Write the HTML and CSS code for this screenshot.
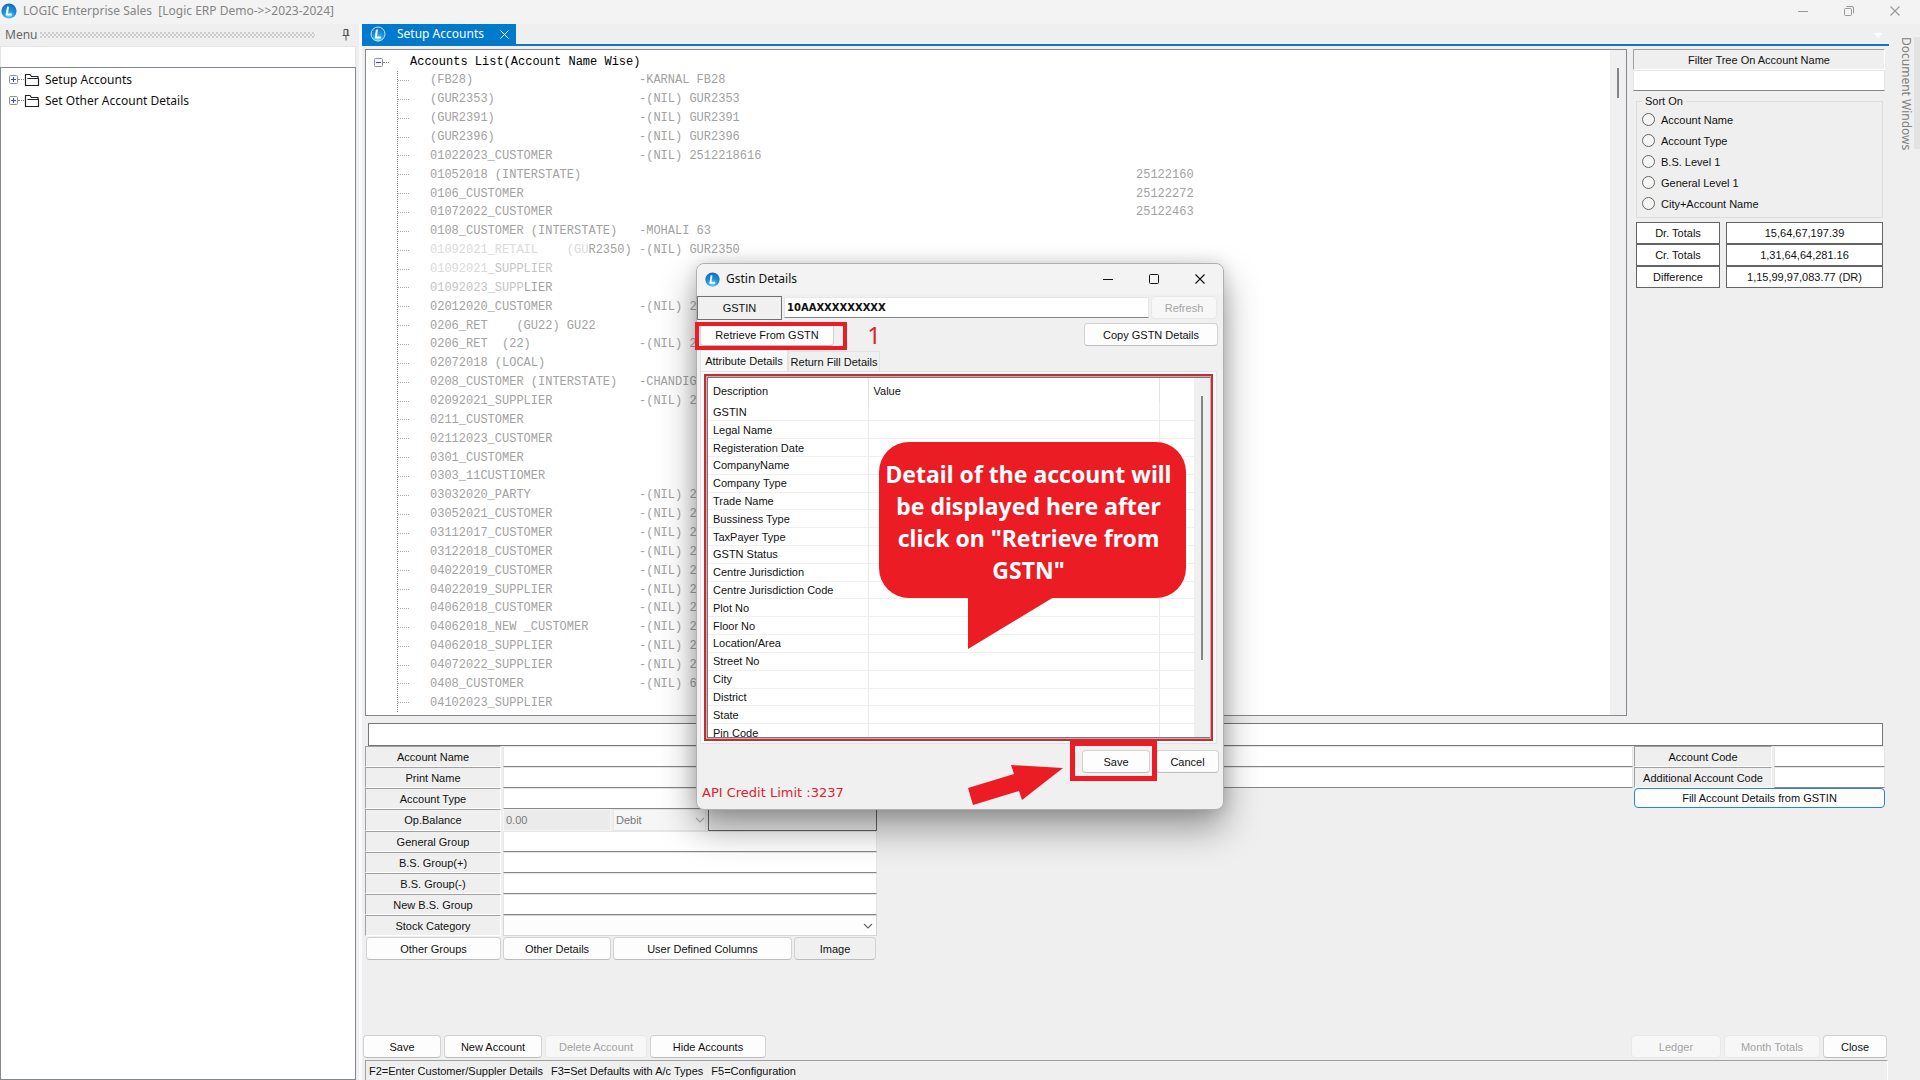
FILE: index.html
```html
<!DOCTYPE html>
<html lang="en">
<head>
<meta charset="utf-8">
<title>LOGIC Enterprise Sales</title>
<link rel="stylesheet" href="styles.css">
</head>
<body>
<svg width="0" height="0" class="defs" aria-hidden="true">
  <defs>
    <radialGradient id="orb" cx="50%" cy="85%" r="85%">
      <stop offset="0" stop-color="#5fd0ff"/><stop offset="0.5" stop-color="#1a8fe0"/><stop offset="1" stop-color="#1668b8"/>
    </radialGradient>
    <symbol id="logo" viewBox="0 0 16 16">
      <circle cx="8" cy="8" r="7.6" fill="url(#orb)"/>
      <path d="M7 3.6 5.8 11.4H10.8" fill="none" stroke="#fff" stroke-width="2"/>
    </symbol>
    <symbol id="folder" viewBox="0 0 16 14">
      <path d="M14 5.5V3.5H7.5L6 1.5H1.5V12.5H14.5V5.5H3.5" fill="none" stroke="#222" stroke-width="1.2" stroke-linejoin="round"/>
    </symbol>
    <symbol id="plus" viewBox="0 0 9 9">
      <rect x="0.5" y="0.5" width="8" height="8" rx="1" fill="#f6f6f6" stroke="#919191"/><path d="M2 4.5H7M4.5 2V7" stroke="#3c50a0"/>
    </symbol>
    <symbol id="minus" viewBox="0 0 9 9">
      <rect x="0.5" y="0.5" width="8" height="8" rx="1" fill="#f6f6f6" stroke="#919191"/><path d="M2 4.5H7" stroke="#3c50a0"/>
    </symbol>
    <symbol id="chevron" viewBox="0 0 10 6"><path d="M1 1 5 5 9 1" fill="none" stroke="currentColor" stroke-width="1.1"/></symbol>
    <symbol id="min" viewBox="0 0 10 10"><path d="M0 5.5H10" stroke="currentColor"/></symbol>
    <symbol id="max" viewBox="0 0 10 10"><rect x="0.5" y="0.5" width="9" height="9" rx="1" fill="none" stroke="currentColor"/></symbol>
    <symbol id="restore" viewBox="0 0 10 10"><rect x="0.5" y="2.5" width="7" height="7" rx="1" fill="none" stroke="currentColor"/><path d="M2.5 0.5H8A1.5 1.5 0 0 1 9.5 2V7.5" fill="none" stroke="currentColor"/></symbol>
    <symbol id="x" viewBox="0 0 10 10"><path d="M0.5 0.5 9.5 9.5M9.5 0.5 0.5 9.5" stroke="currentColor" stroke-width="1.1"/></symbol>
  </defs>
</svg>

<div class="app">
  <header class="titlebar">
    <svg class="logo"><use href="#logo"/></svg>
    <h1>LOGIC Enterprise Sales&nbsp; [Logic ERP Demo-&gt;&gt;2023-2024]</h1>
    <div class="window-buttons">
      <button aria-label="Minimize"><svg><use href="#min"/></svg></button>
      <button aria-label="Restore"><svg><use href="#restore"/></svg></button>
      <button aria-label="Close window"><svg><use href="#x"/></svg></button>
    </div>
  </header>

  <div class="body">
    <aside class="menu">
      <div class="menu-head">
        <label for="menu-search">Menu</label><span class="grip"></span>
        <svg class="pin" viewBox="0 0 8 12"><path d="M2 0.5H6V6.5M2 0.5V6.5M0.5 6.5H7.5M4 6.5V11.5M5.3 1V6" fill="none" stroke="#555"/></svg>
      </div>
      <input id="menu-search" class="menu-search" type="text">
      <ul class="menu-tree">
        <li><svg class="toggle"><use href="#plus"/></svg><span class="link"></span><svg class="folder"><use href="#folder"/></svg><a href="#">Setup Accounts</a></li>
        <li><svg class="toggle"><use href="#plus"/></svg><span class="link"></span><svg class="folder"><use href="#folder"/></svg><a href="#">Set Other Account Details</a></li>
      </ul>
    </aside>

    <main class="workspace">
      <div class="tabs">
        <div class="tab">
          <svg class="logo"><use href="#logo"/><circle cx="50%" cy="50%" r="7" fill="none" stroke="#bfe2fa"/></svg>
          <span>Setup Accounts</span>
          <button aria-label="Close tab"><svg><use href="#x"/></svg></button>
        </div>
        <svg class="tab-menu" viewBox="0 0 8 5"><path d="M0 0H8L4 5Z" fill="#fff"/></svg>
      </div>

      <div class="page">
        <div class="top">
          <section class="accounts">
            <div class="tree">
              <div class="root"><svg class="toggle"><use href="#minus"/></svg><span class="link"></span><span class="root-name">Accounts List(Account Name Wise)</span></div>
              <ul class="rows">
                <li><span>(FB28)</span><span>-KARNAL FB28</span></li>
                <li><span>(GUR2353)</span><span>-(NIL) GUR2353</span></li>
                <li><span>(GUR2391)</span><span>-(NIL) GUR2391</span></li>
                <li><span>(GUR2396)</span><span>-(NIL) GUR2396</span></li>
                <li><span>01022023_CUSTOMER</span><span>-(NIL) 2512218616</span></li>
                <li><span>01052018 (INTERSTATE)</span><span></span><span>25122160</span></li>
                <li><span>0106_CUSTOMER</span><span></span><span>25122272</span></li>
                <li><span>01072022_CUSTOMER</span><span></span><span>25122463</span></li>
                <li><span>0108_CUSTOMER (INTERSTATE)</span><span>-MOHALI 63</span></li>
                <li><span><i class="faint">01092021_RETAIL    (GU</i>R2350)</span><span>-(NIL) GUR2350</span></li>
                <li><span><i class="faint">01092021</i><i class="pale">_SUPPLIER</i></span></li>
                <li><span><i class="pale">01092023_SUPP</i>LIER</span></li>
                <li><span>02012020_CUSTOMER</span><span>-(NIL) 2</span></li>
                <li><span>0206_RET    (GU22) GU22</span></li>
                <li><span>0206_RET  (22)</span><span>-(NIL) 2</span></li>
                <li><span>02072018 (LOCAL)</span></li>
                <li><span>0208_CUSTOMER (INTERSTATE)</span><span>-CHANDIG</span></li>
                <li><span>02092021_SUPPLIER</span><span>-(NIL) 2</span></li>
                <li><span>0211_CUSTOMER</span></li>
                <li><span>02112023_CUSTOMER</span></li>
                <li><span>0301_CUSTOMER</span></li>
                <li><span>0303_11CUSTIOMER</span></li>
                <li><span>03032020_PARTY</span><span>-(NIL) 2</span></li>
                <li><span>03052021_CUSTOMER</span><span>-(NIL) 2</span></li>
                <li><span>03112017_CUSTOMER</span><span>-(NIL) 2</span></li>
                <li><span>03122018_CUSTOMER</span><span>-(NIL) 2</span></li>
                <li><span>04022019_CUSTOMER</span><span>-(NIL) 2</span></li>
                <li><span>04022019_SUPPLIER</span><span>-(NIL) 2</span></li>
                <li><span>04062018_CUSTOMER</span><span>-(NIL) 2</span></li>
                <li><span>04062018_NEW _CUSTOMER</span><span>-(NIL) 2</span></li>
                <li><span>04062018_SUPPLIER</span><span>-(NIL) 2</span></li>
                <li><span>04072022_SUPPLIER</span><span>-(NIL) 2</span></li>
                <li><span>0408_CUSTOMER</span><span>-(NIL) 6</span></li>
                <li><span>04102023_SUPPLIER</span></li>
              </ul>
            </div>
            <div class="scroll"><span class="thumb"></span></div>
          </section>

          <aside class="side">
            <label class="filter-label" for="filter">Filter Tree On Account Name</label>
            <input id="filter" class="field filter" type="text">
            <fieldset class="sort">
              <legend>Sort On</legend>
              <label><input type="radio" name="sort">Account Name</label>
              <label><input type="radio" name="sort">Account Type</label>
              <label><input type="radio" name="sort">B.S. Level 1</label>
              <label><input type="radio" name="sort">General Level 1</label>
              <label><input type="radio" name="sort">City+Account Name</label>
            </fieldset>
            <dl class="totals">
              <dt>Dr. Totals</dt><dd>15,64,67,197.39</dd>
              <dt>Cr. Totals</dt><dd>1,31,64,64,281.16</dd>
              <dt>Difference</dt><dd>1,15,99,97,083.77 (DR)</dd>
            </dl>
          </aside>
        </div>

        <input class="remark" type="text" aria-label="Selected account">

        <form class="form">
          <div class="form-main">
            <div class="row"><label class="cap" for="an">Account Name</label><input id="an" class="field" type="text"></div>
            <div class="row"><label class="cap" for="pn">Print Name</label><input id="pn" class="field" type="text"></div>
            <div class="row narrow"><label class="cap" for="at">Account Type</label><input id="at" class="field" type="text"></div>
            <div class="row narrow tall"><label class="cap" for="ob">Op.Balance</label>
              <input id="ob" class="opening" type="text" value="0.00" disabled>
              <span class="drop off"><select aria-label="Balance side" disabled><option>Debit</option></select><svg><use href="#chevron"/></svg></span>
              <input class="balance" type="text" aria-label="Balance">
            </div>
            <div class="row narrow"><label class="cap" for="gg">General Group</label><input id="gg" class="field" type="text"></div>
            <div class="row narrow"><label class="cap" for="bp">B.S. Group(+)</label><input id="bp" class="field" type="text"></div>
            <div class="row narrow"><label class="cap" for="bm">B.S. Group(-)</label><input id="bm" class="field" type="text"></div>
            <div class="row narrow"><label class="cap" for="nb">New B.S. Group</label><input id="nb" class="field" type="text"></div>
            <div class="row narrow"><label class="cap" for="sc">Stock Category</label>
              <span class="drop"><select id="sc"><option></option></select><svg><use href="#chevron"/></svg></span>
            </div>
            <div class="form-buttons">
              <button type="button" class="btn">Other Groups</button>
              <button type="button" class="btn">Other Details</button>
              <button type="button" class="btn">User Defined Columns</button>
              <button type="button" class="btn flat">Image</button>
            </div>
          </div>
          <div class="form-side">
            <div class="row"><label class="cap" for="ac">Account Code</label><input id="ac" class="field" type="text"></div>
            <div class="row"><label class="cap" for="aac">Additional Account Code</label><input id="aac" class="field" type="text"></div>
            <button type="button" class="btn focus">Fill Account Details from GSTIN</button>
          </div>
        </form>

        <div class="actions">
          <button class="btn w-save">Save</button>
          <button class="btn w-new">New Account</button>
          <button class="btn w-del" disabled>Delete Account</button>
          <button class="btn w-hide">Hide Accounts</button>
          <span class="fill"></span>
          <button class="btn w-ledger" disabled>Ledger</button>
          <button class="btn w-month" disabled>Month Totals</button>
          <button class="btn w-close">Close</button>
        </div>
        <footer class="status"><span>F2=Enter Customer/Suppler Details</span><span>F3=Set Defaults with A/c Types</span><span>F5=Configuration</span></footer>
      </div>
    </main>

    <aside class="dock"><span>Document Windows</span></aside>
  </div>
</div>

<section class="dialog" role="dialog" aria-labelledby="dlg-title">
  <header class="dialog-title">
    <svg class="logo"><use href="#logo"/></svg>
    <h2 id="dlg-title">Gstin Details</h2>
    <div class="window-buttons">
      <button aria-label="Minimize dialog"><svg><use href="#min"/></svg></button>
      <button aria-label="Maximize dialog"><svg><use href="#max"/></svg></button>
      <button aria-label="Close dialog"><svg><use href="#x"/></svg></button>
    </div>
  </header>
  <div class="gst-row">
    <label class="gst-label" for="gstin">GSTIN</label>
    <input id="gstin" class="field gst-input" type="text" value="10AAXXXXXXXXX">
    <button class="btn" disabled>Refresh</button>
  </div>
  <div class="retrieve-row">
    <button class="btn retrieve">Retrieve From GSTN</button>
    <span class="step">1</span>
    <button class="btn copy">Copy GSTN Details</button>
  </div>
  <div class="dialog-tabs">
    <button class="on">Attribute Details</button><button>Return Fill Details</button>
  </div>
  <div class="pane">
    <div class="grid-box">
      <div class="grid-clip">
        <table>
          <thead><tr><th class="c-desc">Description</th><th class="c-val">Value</th><th></th></tr></thead>
          <tbody>
            <tr><td>GSTIN</td><td></td><td></td></tr>
            <tr><td>Legal Name</td><td></td><td></td></tr>
            <tr><td>Registeration Date</td><td></td><td></td></tr>
            <tr><td>CompanyName</td><td></td><td></td></tr>
            <tr><td>Company Type</td><td></td><td></td></tr>
            <tr><td>Trade Name</td><td></td><td></td></tr>
            <tr><td>Bussiness Type</td><td></td><td></td></tr>
            <tr><td>TaxPayer Type</td><td></td><td></td></tr>
            <tr><td>GSTN Status</td><td></td><td></td></tr>
            <tr><td>Centre Jurisdiction</td><td></td><td></td></tr>
            <tr><td>Centre Jurisdiction Code</td><td></td><td></td></tr>
            <tr><td>Plot No</td><td></td><td></td></tr>
            <tr><td>Floor No</td><td></td><td></td></tr>
            <tr><td>Location/Area</td><td></td><td></td></tr>
            <tr><td>Street No</td><td></td><td></td></tr>
            <tr><td>City</td><td></td><td></td></tr>
            <tr><td>District</td><td></td><td></td></tr>
            <tr><td>State</td><td></td><td></td></tr>
            <tr><td>Pin Code</td><td></td><td></td></tr>
          </tbody>
        </table>
      </div>
      <div class="scroll"><span class="thumb"></span></div>
    </div>
  </div>
  <div class="dialog-foot">
    <p class="credit">API Credit Limit :3237</p>
    <div class="dialog-actions"><button class="btn dlg-save">Save</button><button class="btn dlg-cancel">Cancel</button></div>
  </div>

  <span class="mark mark-retrieve"></span>
  <span class="mark mark-save"></span>
  <svg class="arrow" viewBox="0 0 96 42"><path d="M0 24 46 10 43 1 95 4 54 36 51 27 5 41Z" fill="#ec1c24"/></svg>
  <div class="callout">
    <p>Detail of the account will be displayed here after click on "Retrieve from GSTN"</p>
    <svg viewBox="0 0 86 52"><path d="M0 0H86L0 52Z" fill="#ec1c24"/></svg>
  </div>
</section>
</body>
</html>
```
FILE: styles.css
```css
:root {
  --ui: "Liberation Sans", Arial, sans-serif;
  --segoe: "Noto Sans", "Open Sans", sans-serif;
  --mono: "Liberation Mono", monospace;
  --bg: #efefef;
  --red: #ec1c24;
}
* { box-sizing: border-box; }
body { margin: 0; background: var(--bg); color: #111; font: 11px/16px var(--ui); overflow: hidden; position: relative; }
.defs { position: absolute; }
h1, h2, p, dl, dd, ul { margin: 0; padding: 0; font-weight: normal; list-style: none; }
input, select, button { font: inherit; color: inherit; margin: 0; min-width: 0; border-radius: 0; outline: 0; }
button { padding: 0; border: 0; background: none; }

.app { display: flex; flex-direction: column; height: 100vh; }
.logo { width: 16px; height: 16px; flex: none; }

/* main window title */
.titlebar { display: flex; align-items: center; gap: 6px; height: 24px; padding: 0 2px 2px 1px; background: #f3f3f3; color: #858585; font: 12px/16px var(--segoe); }
.titlebar h1 { flex: 1; font-size: 12px; }
.window-buttons { display: flex; align-items: center; }
.window-buttons button { width: 46px; height: 22px; display: grid; place-items: center; }
.window-buttons svg { width: 10px; height: 10px; }
.titlebar .window-buttons { color: #999; }

.body { flex: 1; min-height: 0; display: flex; }

/* left menu */
.menu { width: 356px; display: flex; flex-direction: column; }
.menu-head { display: flex; align-items: center; height: 22px; padding: 0 6px 0 5px; color: #666; font: 12px/16px var(--segoe); gap: 3px; }
.grip { flex: 1; height: 6px; margin-right: 24px; background: radial-gradient(circle at 1px 1px, #ccc 1px, transparent 1px) 0 0 / 4px 4px, radial-gradient(circle at 1px 1px, #ccc 1px, transparent 1px) 2px 2px / 4px 4px; }
.pin { width: 8px; height: 12px; }
.menu-search { height: 21px; border: 1px solid #e4e4e4; border-bottom: 0; background: #fff; }
.menu-tree { flex: 1; border: 1px solid #828790; background: #fff; padding: 1px 8px; font: 12px/21px var(--segoe); }
.menu-tree li { display: flex; align-items: center; height: 21px; }
.menu-tree a { color: #111; text-decoration: none; margin-left: 5px; }
.toggle { width: 9px; height: 9px; flex: none; }
.link { width: 6px; border-top: 1px dotted #888; }
.folder { width: 16px; height: 14px; }

/* tab strip */
.workspace { flex: 1; min-width: 0; display: flex; flex-direction: column; margin-left: 6px; box-shadow: -3px 0 0 #fafafa; }
.tabs { display: flex; align-items: flex-end; justify-content: space-between; height: 22px; border-bottom: 2px solid #1177bd; }
.tab { display: flex; align-items: center; gap: 11px; height: 20px; width: 154px; padding: 0 2px 0 8px; background: #007acc; color: #fff; font: 12px/16px var(--segoe); align-self: flex-start; }
.tab span { flex: 1; white-space: nowrap; }
.tab button { width: 20px; display: grid; place-items: center; }
.tab button svg { width: 9px; height: 9px; }
.tab-menu { width: 8px; height: 5px; margin: 0 7px 6px 0; }

.page { flex: 1; min-height: 0; display: flex; flex-direction: column; }
.top { flex: 1; min-height: 0; display: flex; gap: 6px; margin: 3px 4px 0 3px; }

/* accounts tree */
.accounts { flex: 1; min-width: 0; display: flex; background: #fff; border: 1px solid #828790; font: 12px/18px var(--mono); }
.tree { flex: 1; min-width: 0; display: flex; flex-direction: column; padding: 3px 0 3px; }
.root { display: flex; align-items: center; height: 18px; padding-left: 8px; color: #000; }
.root-name { margin-left: 21px; }
.rows { flex: 1; min-height: 0; display: flex; flex-direction: column; margin-left: 31px; border-left: 1px dotted #888; color: #a2a2a2; white-space: pre; }
.rows li { flex: 1; min-height: 0; display: grid; grid-template-columns: 32px 209px 497px 1fr; align-items: center; }
.rows li::before { content: ""; width: 11px; border-top: 1px dotted #aaa; }
.rows i { font-style: normal; }
.faint { color: #dadada; }
.pale { color: #c4c4c4; }
.scroll { width: 16px; background: #f0f0f0; display: flex; justify-content: center; }
.thumb { width: 2px; background: #858585; }
.accounts .thumb { height: 30px; margin-top: 18px; }

/* right column */
.side { width: 252px; display: flex; flex-direction: column; }
.filter-label { height: 21px; border: 1px solid #a0a0a0; border-right-color: #fff; border-bottom-color: #fff; text-align: center; line-height: 20px; }
.field { height: 21px; border: 1px solid #e6e6e6; border-bottom: 1px solid #868686; background: #fff; padding: 0 4px; }
.sort { margin: 2px 2px 0 3px; padding: 0 5px 3px; border: 1px solid #dcdcdc; display: flex; flex-direction: column; min-width: 0; }
.sort legend { padding: 0 3px; line-height: 16px; }
.sort label { display: flex; align-items: center; gap: 6px; height: 21px; }
.sort input { appearance: none; width: 13px; height: 13px; border: 1px solid #666; border-radius: 50%; background: #f5f5f5; }
.totals { display: grid; grid-template-columns: 84px 1fr; grid-auto-rows: 22px; column-gap: 6px; margin: 4px 2px 0 3px; }
.totals dt, .totals dd { border: 1px solid #646464; background: #fff; text-align: center; line-height: 21px; }

/* account form */
.remark { height: 23px; margin: 7px 6px 0; border: 1px solid #777; background: #fff; }
.form { display: flex; gap: 1px; margin: 0 4px 0 3px; }
.form-main { flex: 1; min-width: 0; }
.form-side { width: 251px; }
.row { display: flex; gap: 2px; height: 21px; }
.tall { height: 22px; }
.row .field { flex: 1; }
.narrow { width: 512px; }
.cap { width: 136px; border: 1px solid #a0a0a0; border-right-color: #fff; border-bottom-color: #fff; text-align: center; line-height: 20px; }
.form-side .cap { width: 138px; }
.opening { width: 108px; border: 1px solid #f4f4f4; background: #ebebeb; color: #777; padding: 0 2px; }
.balance { width: 169px; border: 1px solid #646464; background: #efefef; }
.drop { flex: 1; display: grid; align-items: center; border: 1px solid #d6d6d6; background: #fdfdfd; }
.drop.off { border-color: #e6e6e6; background: #f6f6f6; color: #777; }
.drop select { grid-area: 1 / 1; appearance: none; width: 100%; height: 19px; border: 0; background: none; padding: 0 2px; opacity: 1; }
.drop svg { grid-area: 1 / 1; justify-self: end; width: 10px; height: 6px; margin-right: 3px; color: #666; pointer-events: none; }
.drop.off svg { margin-right: 0; color: #b0b0b0; }
.form-buttons { display: grid; grid-template-columns: 135px 108px 179px 82px; gap: 2px; margin: 1px 0 0 1px; }

.btn { height: 23px; border: 1px solid #d2d2d2; border-bottom-color: #bcbcbc; border-radius: 4px; background: #fdfdfd; white-space: nowrap; }
.btn:disabled { color: #a4a4a4; border-color: #e8e8e8; background: #f7f7f7; }
.btn.flat { background: #f0f0f0; }
.btn.focus { width: 100%; height: 20px; border-color: #2f83c6; display: block; }

.actions { display: flex; gap: 3px; margin: 75px 2px 0 1px; }
.actions .fill { flex: 1; }
.w-save { width: 78px; }
.w-new { width: 98px; }
.w-del { width: 102px; }
.w-hide { width: 116px; }
.w-ledger { width: 90px; }
.w-month { width: 96px; }
.w-close { width: 64px; }
.status { display: flex; gap: 8px; height: 20px; margin: 2px 1px 0 3px; padding-left: 3px; border: 1px solid #a0a0a0; border-right-color: #fff; border-bottom: 0; line-height: 21px; }

.dock { width: 31px; padding-top: 13px; color: #808080; font: 12px/16px var(--segoe); }
.dock span { display: block; writing-mode: vertical-rl; white-space: nowrap; height: 112px; width: 31px; border-right: 6px solid #e2e2e2; line-height: 16px; }

/* GSTIN dialog */
.dialog { position: absolute; left: calc(50% - 264px); top: 263px; width: 528px; border: 1px solid #b0b0b0; border-radius: 8px; background: #f0f0f0; box-shadow: 0 18px 36px rgba(0, 0, 0, .38), 0 0 16px rgba(0, 0, 0, .14); }
.dialog-title { display: flex; align-items: center; gap: 6px; height: 30px; padding-left: 8px; border-radius: 8px 8px 0 0; background: #f3f3f3; font: 12px/16px var(--segoe); }
.dialog-title .logo { width: 15px; height: 15px; }
.dialog-title h2 { flex: 1; font-size: 12px; }
.gst-row { display: grid; grid-template-columns: 85px 1fr 66px; gap: 2px; padding: 1px 6px 0 0; height: 26px; align-items: center; }
.gst-label { height: 24px; border: 1px solid #707070; text-align: center; line-height: 23px; }
.gst-input { font: bold 10px/16px "DejaVu Sans", sans-serif; padding: 0 2px; }
.retrieve-row { display: flex; align-items: center; height: 29px; padding: 0 5px 0 3px; }
.retrieve { width: 134px; }
.step { width: 80px; text-align: center; color: #d8242c; font: 24px/28px var(--segoe); }
.copy { width: 134px; margin-left: auto; }
.dialog-tabs { display: flex; align-items: flex-end; height: 22px; padding-left: 3px; }
.dialog-tabs button { height: 20px; width: 92px; border: 1px solid #e2e2e2; border-bottom: 0; white-space: nowrap; }
.dialog-tabs .on { height: 22px; width: 88px; background: #f9f9f9; }
.pane { margin: 0 6px 0 3px; padding: 2px 3px; border: 1px solid #e2e2e2; background: #f9f9f9; }
.grid-box { display: flex; height: 367px; border: 2px solid #b8323a; outline: 1px solid #e9a0a4; outline-offset: -3px; background: #fff; padding: 1px; }
.grid-clip { flex: 1; overflow: hidden; border: 1px solid #777; border-right: 0; }
.grid-clip table { width: 100%; height: 364px; table-layout: fixed; border-collapse: collapse; }
.grid-clip th { height: 25px; padding: 0 5px; text-align: left; font-weight: normal; border-right: 1px solid #e2e2e2; }
.grid-clip td { padding: 0 5px; line-height: 16px; height: 17px; border-bottom: 1px solid #efefef; border-right: 1px solid #ebebeb; white-space: nowrap; }
.grid-clip th:last-child, .grid-clip td:last-child { border-right: 0; }
.c-desc { width: 160px; }
.c-val { width: 291px; }
.grid-box .scroll { border-top: 1px solid #777; border-bottom: 1px solid #777; }
.grid-box .thumb { height: 264px; margin-top: 18px; }
.dialog-foot { display: flex; justify-content: space-between; height: 65px; padding: 6px 4px 0 5px; }
.credit { align-self: flex-end; margin-bottom: 8px; color: #d8242c; font: 13px/16px "DejaVu Sans", sans-serif; }
.dialog-actions { display: flex; gap: 6px; }
.dlg-save { width: 68px; }
.dlg-cancel { width: 63px; }

/* red annotations drawn over the dialog */
.mark { position: absolute; border: 4px solid var(--red); pointer-events: none; }
.mark-retrieve { left: -2px; top: 58px; width: 152px; height: 28px; }
.mark-save { left: 373px; top: 477px; width: 87px; height: 40px; border-width: 5px; }
.arrow { position: absolute; left: 271px; top: 500px; width: 96px; height: 42px; }
.callout { position: absolute; left: 182px; top: 178px; width: 307px; }
.callout p { height: 156px; padding: 16px 12px 0 4px; border-radius: 30px; background: var(--red); color: #fff; text-align: center; font: bold 23px/32px var(--segoe); }
.callout svg { display: block; width: 86px; height: 52px; margin: -1px 0 0 89px; }
```
